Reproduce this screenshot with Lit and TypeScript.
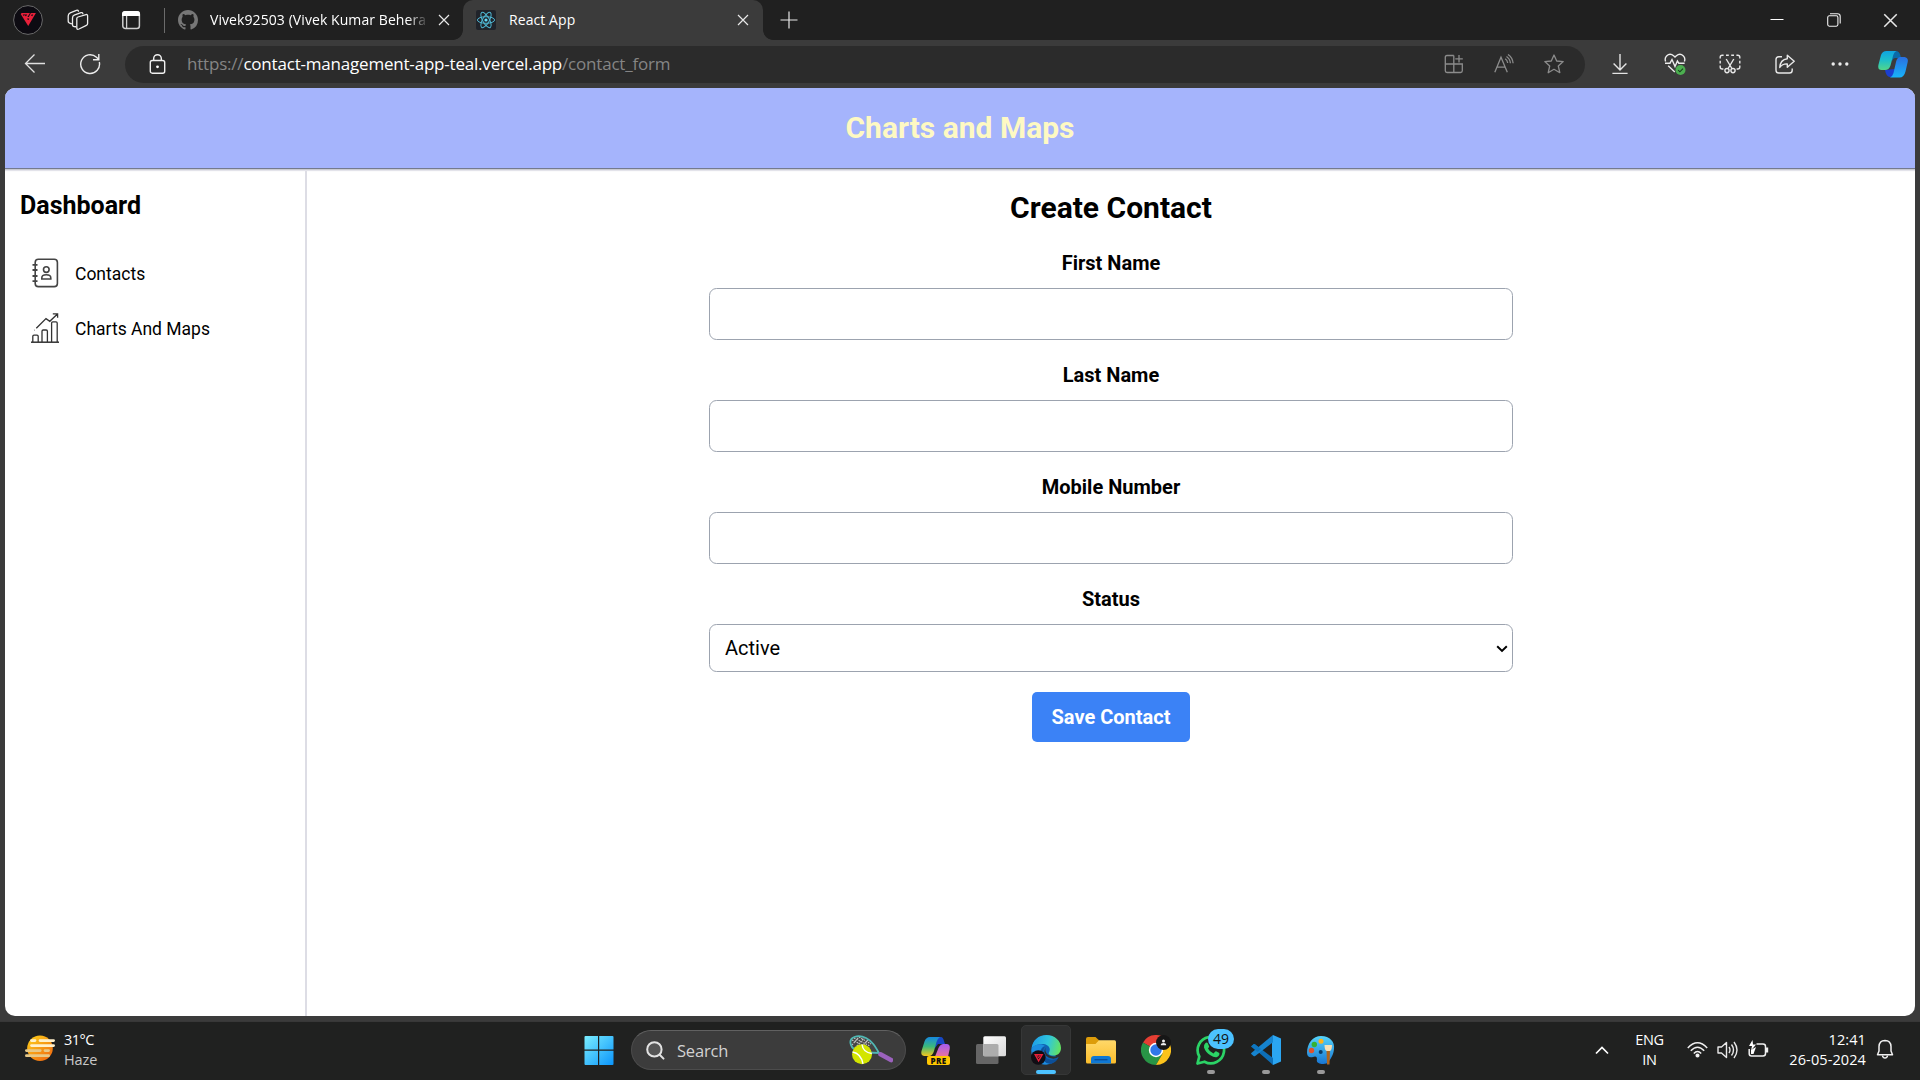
import { LitElement, html, css } from "lit";
import { customElement } from "lit/decorators.js";

const closeGlyph = (s: number) => html`<svg class="ico" width="${s}" height="${s}" viewBox="0 0 12 12"><path d="M1 1L11 11M11 1L1 11" stroke="#e8e8e8" stroke-width="1.2" fill="none"/></svg>`;

@customElement("tab-strip")
class TabStrip extends LitElement {
  static styles = css`
    :host { display: block; height: 40px; background: #202020; font-family: "Open Sans", "Noto Sans", sans-serif; }
    .strip { display: flex; height: 40px; align-items: center; }
    .cell { display: flex; justify-content: center; align-items: center; height: 40px; flex: none; }
    .profile { width: 56px; }
    .workspaces { width: 43px; }
    .actions { width: 63px; }
    .sep { width: 1px; height: 25px; background: #6b6b6b; margin-left: 2px; flex: none; }
    .tab { display: flex; align-items: center; height: 40px; flex: none; color: #fff; font-size: 14px; box-sizing: border-box; }
    .idle { width: 298px; padding-left: 13px; }
    .idle .title { width: 217px; margin-left: 12px; letter-spacing: 0.08px;
      -webkit-mask-image: linear-gradient(90deg, #000 91%, transparent 101%); mask-image: linear-gradient(90deg, #000 91%, transparent 101%); }
    .title { white-space: nowrap; overflow: hidden; line-height: 22px; }
    .idle .ico { margin-left: 11px; }
    .active { position: relative; width: 300px; background: #3b3b3b; border-radius: 10px 10px 0 0; padding-left: 13px; }
    .active::before, .active::after { content: ""; position: absolute; bottom: 0; width: 10px; height: 10px; }
    .active::before { left: -10px; background: radial-gradient(circle at 0 0, transparent 9.5px, #3b3b3b 10.2px); }
    .active::after { right: -10px; background: radial-gradient(circle at 100% 0, transparent 9.5px, #3b3b3b 10.2px); }
    .active .title { width: 228px; margin-left: 13px; letter-spacing: 0.08px; }
    .plus { width: 51px; }
    .win { display: flex; margin-left: auto; padding-right: 1px; }
    .win .cell { width: 57px; }
  `;
  render() {
    return html`<div class="strip">
      <div class="cell profile"><svg width="30" height="30" viewBox="0 0 30 30"><circle cx="15" cy="15" r="14.4" fill="#0d0b12" stroke="#6a6a6a" stroke-width="1"/><path d="M8.3 8.7H15.6L13 12.8H16.2L18.3 8.7H21.6L15.2 19.6L8.3 8.7M11.2 10.5L15.2 17L18.6 10.8" fill="none" stroke="#e8203a" stroke-width="1.5"/></svg></div>
      <div class="cell workspaces"><svg width="22" height="22" viewBox="0 0 22 22" fill="none" stroke="#ececec" stroke-width="1.3" stroke-linejoin="round"><path d="M9.8 9.5Q9.8 8.4 11 8L19 5.6Q20.6 5.2 20.6 6.8V14.6Q20.6 16 19.4 16.4L12 20Q9.8 20.9 9.8 19Z"/><path d="M9.3 17.7Q5.5 18 5.5 16V9Q5.5 6.8 7.2 6.2L14 3.7Q15.8 3.1 15.9 5.2"/><path d="M4.9 14.9Q1.2 14.3 1.2 12.3V7Q1.2 4.6 3.2 3.8L9.4 1.3Q11.4 .7 11.5 2.8"/></svg></div>
      <div class="cell actions"><svg width="20" height="20" viewBox="0 0 20 20"><rect x="1.8" y="1.8" width="16.6" height="16.6" rx="2.5" fill="none" stroke="#cfcfcf" stroke-width="1.5"/><path d="M1 6V4Q1 1 4 1H16Q19 1 19 4V6Z" fill="#fff"/><path d="M5.6 6V18" stroke="#cfcfcf" stroke-width="1.3"/></svg></div>
      <div class="sep"></div>
      <div class="tab idle">
        <svg width="20" height="20" viewBox="0 0 16 16"><path fill="#777" d="M8 0C3.58 0 0 3.58 0 8c0 3.54 2.29 6.53 5.47 7.59.4.07.55-.17.55-.38 0-.19-.01-.82-.01-1.49-2.01.37-2.53-.49-2.69-.94-.09-.23-.48-.94-.82-1.13-.28-.15-.68-.52-.01-.53.63-.01 1.08.58 1.23.82.72 1.21 1.87.87 2.33.66.07-.52.28-.87.51-1.07-1.78-.2-3.64-.89-3.64-3.95 0-.87.31-1.59.82-2.15-.08-.2-.36-1.02.08-2.12 0 0 .67-.21 2.2.82.64-.18 1.32-.27 2-.27s1.36.09 2 .27c1.53-1.04 2.2-.82 2.2-.82.44 1.1.16 1.92.08 2.12.51.56.82 1.27.82 2.15 0 3.07-1.87 3.75-3.65 3.95.29.25.54.73.54 1.48 0 1.07-.01 1.93-.01 2.2 0 .21.15.46.55.38A8.01 8.01 0 0 0 16 8c0-4.42-3.58-8-8-8Z"/></svg>
        <span class="title">Vivek92503 (Vivek Kumar Behera</span>${closeGlyph(12)}
      </div>
      <div class="tab active">
        <svg width="20" height="20" viewBox="0 0 20 20"><rect width="20" height="20" rx="2" fill="#20232a"/><g fill="none" stroke="#4fb6d2" stroke-width="1"><ellipse cx="10" cy="10" rx="8.6" ry="3.3"/><ellipse cx="10" cy="10" rx="8.6" ry="3.3" transform="rotate(60 10 10)"/><ellipse cx="10" cy="10" rx="8.6" ry="3.3" transform="rotate(120 10 10)"/></g><circle cx="10" cy="10" r="1.6" fill="#61dafb"/></svg>
        <span class="title">React App</span>${closeGlyph(12)}
      </div>
      <div class="cell plus"><svg width="18" height="18" viewBox="0 0 18 18"><path d="M9 .5V17.5M.5 9H17.5" stroke="#e8e8e8" stroke-width="1.2"/></svg></div>
      <div class="win">
        <div class="cell"><svg width="14" height="14"><path d="M.5 6.5H13.5" stroke="#fff" stroke-width="1"/></svg></div>
        <div class="cell"><svg width="14" height="14" viewBox="0 0 14 14" fill="none" stroke="#f0f0f0" stroke-width="1.1"><rect x=".7" y="2.8" width="10.2" height="10.4" rx="1.6"/><path d="M3 .7H10.5Q13.2 .7 13.2 3.4V10.6"/></svg></div>
        <div class="cell">${closeGlyph(15)}</div>
      </div>
    </div>`;
  }
}

@customElement("address-bar")
class AddressBar extends LitElement {
  static styles = css`
    :host { display: block; height: 48px; background: #3b3b3b; font-family: "Open Sans", "Noto Sans", sans-serif; }
    .bar { display: flex; align-items: center; height: 48px; padding-left: 7px; }
    .cell { width: 55px; display: flex; align-items: center; justify-content: center; flex: none; }
    .pill { display: flex; align-items: center; box-sizing: border-box; width: 1460px; height: 37px; margin-left: 8px; margin-right: 7px; border-radius: 19px; background: #2b2b2b; padding-left: 24px; padding-right: 6px; }
    .url { margin-left: 21px; font-size: 17px; color: #858585; white-space: nowrap; line-height: 24px; letter-spacing: -0.2px; }
    .url b { font-weight: 400; color: #fff; }
    .tools { display: flex; margin-left: auto; }
    .tools .cell { width: 50px; }
    .copilot { width: 51px; }
  `;
  render() {
    return html`<div class="bar">
      <div class="cell"><svg width="22" height="22" viewBox="0 0 22 22" fill="none" stroke="#e0e0e0" stroke-width="1.3"><path d="M1.5 10.5H21M10.5 1.5L1.5 10.5L10.5 19.5"/></svg></div>
      <div class="cell"><svg width="22" height="22" viewBox="0 0 22 22" fill="none" stroke="#ececec" stroke-width="1.4"><path d="M20.3 9A9.4 9.4 0 1 1 17.5 4.2L19.8 6.6M19.8 1V6.7H14"/></svg></div>
      <div class="pill">
        <svg width="17" height="20" viewBox="0 0 16 20"><rect x=".8" y="6.5" width="14.4" height="12.7" rx="2" fill="none" stroke="#f0f0f0" stroke-width="1.4"/><path d="M4.2 6.5V4.3A3.8 3.6 0 0 1 11.8 4.3V6.5" fill="none" stroke="#f0f0f0" stroke-width="1.4"/><circle cx="8" cy="12.8" r="1.4" fill="#fff"/></svg>
        <span class="url">https://<b>contact-management-app-teal.vercel.app</b>/contact_form</span>
        <div class="tools">
          <div class="cell"><svg width="20" height="20" viewBox="0 0 20 20" fill="none" stroke="#8c8c8c" stroke-width="1.3"><path d="M9.8 1.5H3Q1.3 1.5 1.3 3.2V16.8Q1.3 18.5 3 18.5H16.5Q18.3 18.5 18.3 16.8V10H1.3M9.8 1.5V18.5M15 1V8.5M11.3 4.8H18.8"/></svg></div>
          <div class="cell"><svg width="20" height="20" viewBox="0 0 20 20" fill="none" stroke="#8c8c8c" stroke-width="1.3"><path d="M.8 18.3L7 3.2L13.3 18.3M3 13.2H11M11.2 4.8Q13.3 6.2 13.7 9M12.5 2.5Q16 4.8 16.4 9.2M14 .5Q18.6 3.5 19.1 9.3"/></svg></div>
          <div class="cell"><svg width="20" height="20" viewBox="0 0 20 20" fill="none" stroke="#8c8c8c" stroke-width="1.3" stroke-linejoin="round"><path d="M10 1L12.7 7L19.2 7.6L14.3 12L15.8 18.7L10 15.3L4.2 18.7L5.7 12L.8 7.6L7.3 7Z"/></svg></div>
        </div>
      </div>
      <div class="cell"><svg width="20" height="22" viewBox="0 0 20 22" fill="none" stroke="#e4e4e4" stroke-width="1.4"><path d="M10 1V17M3.6 10.6L10 17L16.4 10.6M2.4 20.4H17.6"/></svg></div>
      <div class="cell"><svg width="22" height="22" viewBox="0 0 22 22"><path d="M1.6 8.5Q.4 5.2 2.6 3Q6-.2 9.6 2.8L11 4L12.4 2.8Q16-.2 19.4 3Q21.6 5.2 20.4 8.5M1 10.2H6L8 6.5L11 13.5L13.4 8L14.8 10.2H20.6M4.2 12.8L10.8 19" fill="none" stroke="#ececec" stroke-width="1.4"/><circle cx="16.5" cy="17" r="5" fill="#4caf50"/><path d="M14.2 17.2L15.9 18.8L19 15.6" fill="none" stroke="#173d1a" stroke-width="1.1"/></svg></div>
      <div class="cell"><svg width="22" height="20" viewBox="0 0 22 20" fill="none" stroke="#e8e8e8" stroke-width="1.4"><path d="M1.2 4.5V3.2Q1.2 1.2 3.2 1.2H4.6M7 1.2H9.8M12.2 1.2H15M17.4 1.2H18.8Q20.8 1.2 20.8 3.2V4.5M20.8 6.8V9.4M20.8 11.6V13Q20.8 15 18.8 15H17.6M1.2 6.8V9.4M1.2 11.6V13Q1.2 15 3.2 15H4.4M7.2 5L13.2 15M14.8 5L8.8 15"/><circle cx="8" cy="16.6" r="2.1"/><circle cx="14" cy="16.6" r="2.1"/></svg></div>
      <div class="cell"><svg width="21" height="20" viewBox="-1 0 21 20" fill="none" stroke="#e8e8e8" stroke-width="1.4" stroke-linejoin="round"><path d="M7 2.8H3.8Q1 2.8 1 5.5V16.2Q1 19 3.8 19H14.5Q17.2 19 17.2 16.2V14.4M12.3 1.2L19.2 7.2L12.3 13.2V9.9Q7.5 9.6 4.8 13.4Q5.2 5.6 12.3 4.7Z"/></svg></div>
      <div class="cell"><svg width="18" height="4" viewBox="0 0 18 4" fill="#ececec"><circle cx="2.2" cy="2" r="1.7"/><circle cx="9" cy="2" r="1.7"/><circle cx="15.8" cy="2" r="1.7"/></svg></div>
      <div class="cell copilot"><svg width="30" height="28" viewBox="0 0 30 28"><defs>
        <linearGradient id="a" x1="0" y1="0" x2="0" y2="1"><stop offset="0" stop-color="#0fa3e0"/><stop offset=".5" stop-color="#1fbfc8"/><stop offset="1" stop-color="#52d68a"/></linearGradient>
        <linearGradient id="b" x1="0" y1="0" x2="0" y2="1"><stop offset="0" stop-color="#2a6fe0"/><stop offset="1" stop-color="#18b4fa"/></linearGradient></defs>
        <path d="M14 1H18Q21 1 22.3 5L23 8H17Q15 8 14 11Z" fill="#0a6aa8"/>
        <path d="M7 20Q8 26 11.5 27H15L17 19Z" fill="#1b3fd0"/>
        <path d="M8.5 1H18.5Q16 2 15 6L12.5 15.5Q11 20 7 20H3.5Q-.5 20 .4 15L3 5Q4.5 1 8.5 1Z" fill="url(#a)"/>
        <path d="M22 7H26.5Q30.6 7.6 29.7 12L27.5 21.5Q26 27.5 21.5 27.5H12Q14.5 26.5 15.5 23L18 12Q19 7.5 22 7Z" fill="url(#b)"/></svg></div>
    </div>`;
  }
}

@customElement("contact-page")
class ContactPage extends LitElement {
  static styles = css`
    :host { display: block; height: 933px; background: #3b3b3b; padding: 0 5px; box-sizing: border-box; font-family: Roboto, sans-serif; color: #000; }
    .page { height: 928px; background: #fff; border-radius: 10px; overflow: hidden; display: flex; flex-direction: column; }
    .head { position: relative; height: 80px; flex: none; display: flex; align-items: center; justify-content: center; box-sizing: border-box; padding-bottom: 2px; background: #a5b4fc; box-shadow: 0 1px 0 #747a8e, 0 2px 1px #c9cad2, 0 3px 1px #e8e8ee; color: #fef9c3; font-size: 30px; font-weight: 700; }
    .body { display: flex; flex: 1; }
    .side { box-sizing: border-box; width: 302px; border-right: 2px solid #dddde5; padding: 20px 15px; }
    .side h2 { margin: 0; font-size: 25px; line-height: 35px; font-weight: 700; }
    .nav { display: flex; flex-direction: column; margin-top: 22px; }
    .link { display: flex; align-items: center; height: 55px; padding-left: 10px; gap: 15px; font-size: 17.5px; }
    .link span { padding-top: 2px; }
    .main { flex: 1; display: flex; flex-direction: column; align-items: center; padding-top: 20px; }
    .main h1 { margin: 0; font-size: 30px; line-height: 40px; font-weight: 700; }
    .form { width: 804px; display: flex; flex-direction: column; align-items: center; padding-top: 20px; }
    label { font-size: 20px; line-height: 30px; font-weight: 700; margin-bottom: 10px; }
    input, select { box-sizing: border-box; width: 100%; border: 1px solid #9ca3af; border-radius: 7.5px; background: #fff; outline: none; color: #000; font: 400 20px Roboto, sans-serif; padding: 0 15px; }
    input { height: 52px; margin: 0 0 20px; }
    select { height: 48px; appearance: none; -webkit-appearance: none; display: block; }
    .pick { position: relative; width: 100%; }
    .pick svg { position: absolute; right: 5px; top: 21px; }
    button { margin-top: 20px; width: 158px; height: 50px; border: 0; border-radius: 5px; background: #3b82f6; color: #fff; font: 700 20px Roboto, sans-serif; padding: 0; white-space: nowrap; }
  `;
  render() {
    return html`<div class="page">
      <div class="head">Charts and Maps</div>
      <div class="body">
        <div class="side">
          <h2>Dashboard</h2>
          <div class="nav">
            <div class="link"><svg width="30" height="30" viewBox="0 0 30 30" fill="none" stroke="#444" stroke-width="1.6"><rect x="5.2" y="1.2" width="22.2" height="27.4" rx="3.2"/><path d="M2.5 6.8H7.5M2.5 12H7.5M2.5 18H7.5M2.5 23.2H7.5" stroke-width="1.8"/><circle cx="16.3" cy="11.6" r="2.8"/><path d="M11.8 21V20Q11.8 16.8 16.3 16.8Q20.8 16.8 20.8 20V21Z"/></svg><span>Contacts</span></div>
            <div class="link"><svg width="30" height="30" viewBox="0 0 30 30" fill="none" stroke="#333" stroke-width="1.3"><path d="M1 29.2H29" stroke-width="1.5"/><path d="M2.8 29V23.3Q2.8 22.2 4 22.2H7Q8.2 22.2 8.2 23.3V29M12 29V18.2Q12 17 13.2 17H16.2Q17.4 17 17.4 18.2V29M21.6 29V10Q21.6 8.8 22.8 8.8H26Q27.2 8.8 27.2 10V29M6.3 15.2L16 5.6L19.8 8.3L27.2 1.2M22.8 .8H27.6V4.8M4.3 17.3L4.6 17"/></svg><span>Charts And Maps</span></div>
          </div>
        </div>
        <div class="main">
          <h1>Create Contact</h1>
          <div class="form">
            <label>First Name</label><input>
            <label>Last Name</label><input>
            <label>Mobile Number</label><input>
            <label>Status</label>
            <div class="pick"><select><option>Active</option></select><svg width="12" height="8" viewBox="0 0 12 8"><path d="M1.2 1.3L6 5.9L10.8 1.3" fill="none" stroke="#000" stroke-width="2"/></svg></div>
            <button>Save Contact</button>
          </div>
        </div>
      </div>
    </div>`;
  }
}

@customElement("task-bar")
class TaskBar extends LitElement {
  static styles = css`
    :host { display: block; height: 59px; background: #202120; box-shadow: inset 0 1px 0 #383838; font-family: "Open Sans", "Noto Sans", sans-serif; color: #fff; }
    .bar { display: flex; height: 59px; }
    .weather { width: 571px; box-sizing: border-box; padding: 9px 0 0 25px; display: flex; gap: 9px; font-size: 14.5px; line-height: 20px; letter-spacing: -0.5px; }
    .weather svg { margin-top: 5px; }
    .dim { color: #c8c8c8; letter-spacing: -0.1px; }
    .app { position: relative; width: 55px; height: 59px; display: flex; justify-content: center; padding-top: 14px; box-sizing: border-box; flex: none; }
    .open::after { content: ""; position: absolute; left: 23.5px; top: 49px; width: 8px; height: 4px; border-radius: 2px; background: #999; }
    .current::before { content: ""; position: absolute; left: 2.5px; top: 4px; width: 50px; height: 50px; box-sizing: border-box; border-radius: 5px; background: #2e2f2f; border: 1px solid #363737; }
    .current::after { content: ""; position: absolute; left: 17.5px; top: 49px; width: 20px; height: 4px; border-radius: 2px; background: #4cc2ff; }
    .app svg { position: relative; }
    .search { display: flex; align-items: center; box-sizing: border-box; width: 275px; height: 40px; margin: 9px 2px 0 5px; padding: 0 12px 0 14px; border: 1px solid #4c4c4c; border-top-color: #616161; border-radius: 20px; background: #3c3c3c; color: #d2d2d2; font-size: 16.5px; }
    .search span { margin-left: 12px; letter-spacing: -0.2px; }
    .racket { margin-left: auto; }
    .badge { position: absolute; left: 25px; top: 8px; width: 26px; height: 20px; border-radius: 10px; background: #4cc2ff; color: #111; font-size: 14px; line-height: 20px; text-align: center; }
    .pre { position: absolute; left: 19px; top: 35px; width: 23px; height: 9px; border-radius: 2px; background: #ffc700; color: #111; font-size: 8px; line-height: 9px; font-weight: 800; text-align: center; letter-spacing: 0.4px; }
    .tray { margin-left: auto; display: flex; font-size: 14.5px; line-height: 20px; }
    .chev { width: 22px; padding-top: 19px; }
    .lang { width: 65px; text-align: center; padding-top: 9px; letter-spacing: -0.3px; }
    .status { display: flex; gap: 9px; padding: 19px 0 0 5px; }
    .clock { width: 96px; text-align: right; padding-top: 9px; letter-spacing: 0.1px; }
    .bell { padding: 18px 26px 0 10px; }
  `;
  render() {
    return html`<div class="bar">
      <div class="weather"><svg width="30" height="27" viewBox="0 0 30 27"><defs><linearGradient id="sun" x1="0" y1="0" x2=".8" y2="1"><stop offset="0" stop-color="#ffd51a"/><stop offset="1" stop-color="#f06a10"/></linearGradient></defs><circle cx="15" cy="13.2" r="12.8" fill="url(#sun)"/><g stroke-width="2.8" stroke-linecap="round"><path d="M6.5 5.6H10M15 5.6H28.6M6.5 10.6H28.6" stroke="#fff1cc"/><path d="M1.4 15.6H15.2M20 15.6H23.6M1.4 20.7H23.6" stroke="#e8c987"/></g></svg>
        <div>31°C<div class="dim">Haze</div></div></div>
      <div class="app"><svg width="30" height="30" viewBox="0 0 30 30"><defs><linearGradient id="w" x1="0" y1="0" x2="30" y2="30" gradientUnits="userSpaceOnUse"><stop offset="0" stop-color="#7df0ff"/><stop offset="1" stop-color="#0a94fb"/></linearGradient></defs><path d="M.5 2Q.5 1 1.5 1H14V14.6H.5ZM15.2 1H28.5Q29.5 1 29.5 2V14.6H15.2ZM.5 15.8H14V30H1.5Q.5 30 .5 29ZM15.2 15.8H29.5V29Q29.5 30 28.5 30H15.2Z" fill="url(#w)"/></svg></div>
      <div class="search"><svg width="19" height="19" viewBox="0 0 19 19" fill="none" stroke="#e2e2e2" stroke-width="2" stroke-linecap="round"><circle cx="8.4" cy="8.4" r="7.2" fill="#555"/><path d="M13.7 13.7L17.5 17.6"/></svg><span>Search</span>
        <svg class="racket" width="44" height="30" viewBox="0 0 44 30"><path d="M2 10C-1 2 9-1 17 3C23 6 26 11 30 18Q20 18 12 16Q4 15 2 10Z" fill="#454545"/><path d="M3 5L17 12M5 3L21 11M10 2L22 9M3 10L10 2M6 13L15 3M11 14L19 5" stroke="#c4c4c4" stroke-width="1.1" stroke-dasharray="1.6 1"/><path d="M19 17.500L30 18C26 11 23 6 17 3C9-1-1 2 2 10Q2.500 12 5 14" fill="none" stroke="#50b8b4" stroke-width="1.8"/><path d="M31.5 19.3L42 25" stroke="#9b62bd" stroke-width="4.6" stroke-linecap="round"/><circle cx="13" cy="19.3" r="10" fill="#d3e500"/><path d="M3.5 17Q12 18.5 14 28.8M13 9.5Q14 17.5 22.8 18.5" fill="none" stroke="#fff" stroke-width="1.4"/></svg></div>
      <div class="app"><svg width="30" height="30" viewBox="0 0 30 30"><defs><linearGradient id="c1" x1="0" y1="0" x2="0" y2="1"><stop offset="0" stop-color="#1689e0"/><stop offset=".5" stop-color="#3bb97a"/><stop offset="1" stop-color="#f4c61c"/></linearGradient><linearGradient id="c2" x1="0" y1="0" x2="0" y2="1"><stop offset="0" stop-color="#a45bf0"/><stop offset="1" stop-color="#f7788c"/></linearGradient></defs><path d="M14 2H20Q22 2 23 6L24 9H17L14 13Z" fill="#1747c4"/><path d="M9 2H19Q16.5 3.5 15.5 7L13 16Q11.5 21 8 21H3Q-.5 20.5 .5 16L3.5 6.5Q5 2 9 2Z" fill="url(#c1)"/><path d="M22 9H26Q29.5 9.5 28.7 14L26.5 24H13L17.5 13Q19 9.5 22 9Z" fill="url(#c2)"/></svg><span class="pre">PRE</span></div>
      <div class="app"><svg width="30" height="30" viewBox="0 0 30 30"><defs><linearGradient id="tv" x1="0" y1="0" x2="1" y2="1"><stop offset="0" stop-color="#fff"/><stop offset="1" stop-color="#d8d8d8"/></linearGradient></defs><rect x="0" y="9" width="22.5" height="20" rx="1.5" fill="#666"/><rect x="7.3" y="1.3" width="22.7" height="20" rx="1.5" fill="url(#tv)"/><path d="M7.3 9H21Q22.5 9 22.5 10.5V21.3H8.8Q7.3 21.3 7.3 19.8Z" fill="#adadad"/></svg></div>
      <div class="app current"><svg width="30" height="30" viewBox="0 0 30 30"><defs><linearGradient id="e1" x1="0" y1=".3" x2="1" y2=".5"><stop offset="0" stop-color="#1d9be8"/><stop offset=".55" stop-color="#30c6dc"/><stop offset="1" stop-color="#62e264"/></linearGradient></defs><circle cx="15" cy="15" r="14.5" fill="#1064b4"/><path d="M21 18L30 12V20L27.500 22.500Z" fill="#2e2f2f"/><path d="M.5 14C1.5 5 7.500 0 15.500 0C24 0 30 6 30 13C30 18 26.500 20.500 22.500 20.500C18.500 20.500 17 19 18 17.500C20.500 13 17 9.500 12.500 9C6.500 8.500 2 11 .5 14Z" fill="url(#e1)"/><path d="M.5 14C3 9 10 8 14 11C10 12 8.500 16 10 20C11.500 25 16 28 21 27.500C12 33-1 27 .5 14Z" fill="#1c8ddf"/><path d="M14 11.500C10 16 12 23 19 24.500Q24 25.300 27.500 22.500Q25 27.500 19.500 29Q9 27 9.500 18Q10 13 14 11.500Z" fill="#0c4f98"/><path d="M14.500 12.500Q13.500 17 17 19.800Q20 22 24 21.500L27.800 20.500L27.500 22Q23 25 17.500 22.500Q11.500 19 14.500 12.500Z" fill="#2e2f2f"/><circle cx="7.300" cy="22.500" r="7.300" fill="#100d14"/><path d="M4.200 19.700H11.200L7.600 25.800Z" fill="none" stroke="#e8203a" stroke-width="1.400"/><path d="M6.300 20.300L7.600 22.800L9 20.300" fill="none" stroke="#e8203a"/></svg></div>
      <div class="app"><svg width="30" height="30" viewBox="0 0 30 30"><defs><linearGradient id="f" x1="0" y1="0" x2="0" y2="1"><stop offset="0" stop-color="#ffd869"/><stop offset="1" stop-color="#fbbd2b"/></linearGradient></defs><path d="M0 4Q0 2 2 2H9.500L13 5.300V11H0Z" fill="#dd9c0a"/><path d="M0 9H9.500L13 5.300H28.500Q30 5.300 30 7V27Q30 28.500 28.500 28.500H1.500Q0 28.500 0 27Z" fill="url(#f)"/><path d="M5 28.500V24Q5 21 8 21H22Q25 21 25 24V28.500Z" fill="#0f78d4"/><path d="M8.500 24.700H21.500" stroke="#0a4f9c" stroke-width="1.400"/></svg></div>
      <div class="app"><svg width="30" height="30" viewBox="0 0 30 30"><path d="M15 15L2 7.500A15 15 0 0 1 28 7.500Z" fill="#e53e33"/><path d="M15 15L2 7.500A15 15 0 0 0 15 30L21.500 18.700Z" fill="#289546"/><path d="M15 30A15 15 0 0 0 28 7.500H15L21.500 18.700Z" fill="#fcc31c"/><circle cx="15" cy="15" r="7.200" fill="#fff"/><circle cx="15" cy="15" r="5.700" fill="#3078ea"/><circle cx="22.500" cy="7.500" r="7.500" fill="#161616"/><circle cx="22.500" cy="6" r="1.500" fill="#eee"/><path d="M19.800 10.300Q19.800 8 22.500 8Q25.200 8 25.200 10.300Z" fill="#eee"/></svg></div>
      <div class="app open"><svg width="30" height="30" viewBox="0 0 30 30"><path d="M1.500 28.500L3.300 21.500A13.200 13.200 0 1 1 8.500 26.700Z" fill="none" stroke="#2bd366" stroke-width="2.700" stroke-linejoin="round"/><path d="M9.500 8Q10.500 7 11.600 8L13.200 11.500Q13.200 12.200 12 13.500Q13.500 17 17.500 18.400L19.300 16.500Q20 16 20.600 16.500L23.300 18Q24 20.500 21 22Q18.500 22.800 14 20Q9.500 17 8 12.500Q7.400 10 9.500 8Z" fill="#2bd366"/></svg><span class="badge">49</span></div>
      <div class="app open"><svg width="30" height="30" viewBox="0 0 30 30"><path d="M22 0L30 3.500V26.500L22 30L21 22V8Z" fill="#2ba6f2"/><path d="M0 11.500L2.500 9.300Q3.300 8.800 4.200 9.400L22 23V30L.3 10.900Z" fill="#0d6fb8"/><path d="M0 18.800L2.500 21Q3.300 21.500 4.200 20.900L22 7.300V0L.3 18.100Z" fill="#1684cf"/><path d="M0 11.500L2.500 9.300Q3.300 8.800 4.200 9.400L10 14L6.500 17Z" fill="#0e76c0"/></svg></div>
      <div class="app open"><svg width="30" height="30" viewBox="0 0 30 30"><defs><linearGradient id="p" x1="0" y1="0" x2="0" y2="1"><stop offset="0" stop-color="#55d4fa"/><stop offset="1" stop-color="#1976d2"/></linearGradient></defs><path d="M15 1C24 1 29 7 28 14C27.500 20 25 23 22.500 27Q20 30 13.500 28.500Q10 27.500 11 24Q11 20.500 7 22Q1.500 23.500 1 18C1 8 7 1 15 1Z" fill="url(#p)"/><circle cx="14.700" cy="17" r="2" fill="#0a3d68"/><circle cx="5.500" cy="15.500" r="2.700" fill="#e35129"/><circle cx="8.300" cy="9.500" r="2.700" fill="#34b233"/><circle cx="15" cy="6.300" r="2.500" fill="#ffb31a"/><path d="M20.500 15H24L23.500 29.500H21Z" fill="#b0651c"/><path d="M18.500 10H26Q26 15 24 16H20.500Q18.500 15 18.500 10Z" fill="#f6dfb5"/></svg></div>
      <div class="tray">
        <div class="chev"><svg width="14" height="9" viewBox="0 0 14 9"><path d="M1 7.500L7 1.500L13 7.500" fill="none" stroke="#fff" stroke-width="1.700"/></svg></div>
        <div class="lang">ENG<br>IN</div>
        <div class="status">
          <svg width="21" height="20" viewBox="0 0 21 20" fill="none" stroke="#f0f0f0" stroke-width="1.500"><path d="M.8 8Q10.500-2.500 20.200 8M3.800 10.800Q10.500 3.500 17.200 10.800M6.800 13.500Q10.500 9.500 14.200 13.500"/><circle cx="10.500" cy="15.500" r="1.300" fill="#fff"/></svg>
          <svg width="22" height="20" viewBox="0 0 22 20" fill="none" stroke="#e8e8e8" stroke-width="1.400"><path d="M1 7H4.500L9.500 2.500V17.500L4.500 13H1Z" stroke-linejoin="round"/><path d="M12 7Q14 10 12 13M14.500 4.500Q18.500 10 14.500 15.500M17 2Q23 10 17 18"/></svg>
          <svg width="22" height="20" viewBox="0 0 22 20" fill="none" stroke="#f0f0f0" stroke-width="1.500"><path d="M8.500 4H15Q17.500 4 17.500 6.500V13.500Q17.500 16 15 16H3.500Q1.200 16 1.200 13.500V9"/><path d="M19 7.500V12.500" stroke-width="2.400"/><path d="M4.500 0L1 6H4L3 10.500L8 4.500H5Z" fill="#fff" stroke="none"/><path d="M3 14V10L8 7L5.500 14Z" fill="#fff" stroke="none"/></svg>
        </div>
        <div class="clock">12:41<br>26-05-2024</div>
        <div class="bell"><svg width="18" height="21" viewBox="0 0 18 21" fill="none" stroke="#f0f0f0" stroke-width="1.500"><path d="M1.500 15.800L3 12V7.500Q3.300 1.600 9 1.500Q14.700 1.600 15 7.500V12L16.500 15.800Z" stroke-linejoin="round"/><path d="M6.500 16.500Q6.800 19 9 19Q11.200 19 11.500 16.500"/></svg></div>
      </div>
    </div>`;
  }
}

@customElement("app-root")
class AppRoot extends LitElement {
  static styles = css`
    :host { display: block; width: 1920px; height: 1080px; overflow: hidden; }
    .screen { display: flex; flex-direction: column; height: 1080px; }
  `;
  render() {
    return html`<div class="screen"><tab-strip></tab-strip><address-bar></address-bar><contact-page></contact-page><task-bar></task-bar></div>`;
  }
}
